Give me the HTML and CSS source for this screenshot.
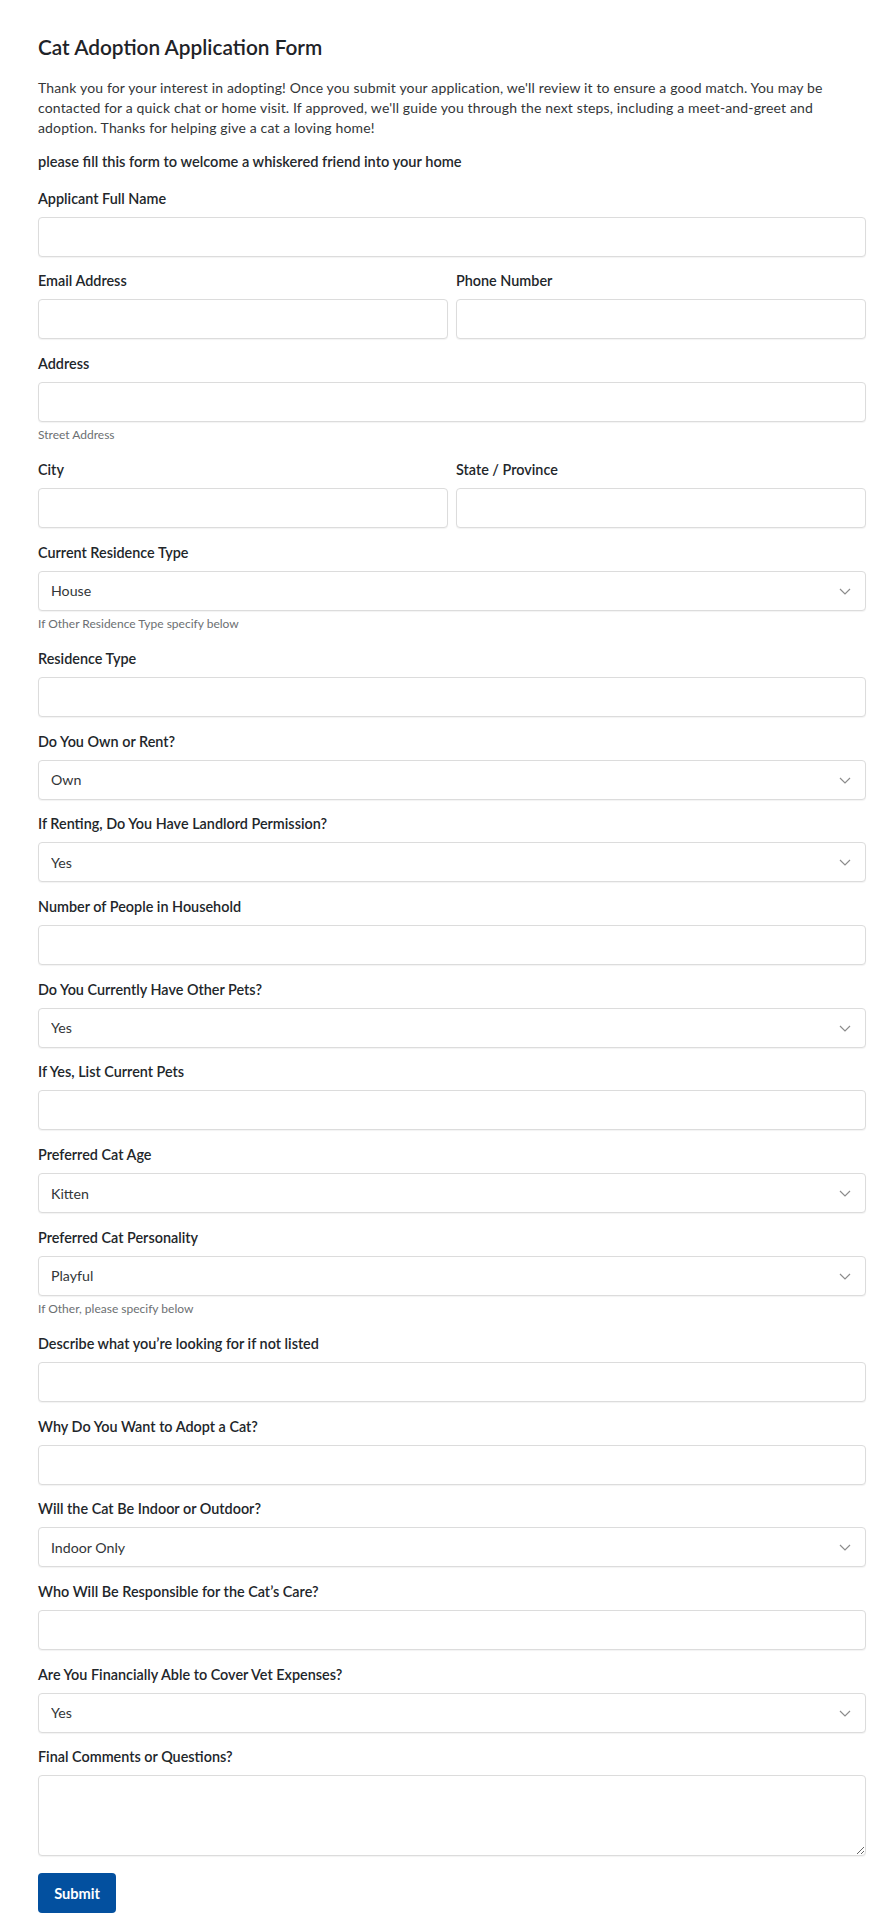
FILE: index.html
```html
<!DOCTYPE html>
<html lang="en">
<head>
<meta charset="utf-8">
<title>Cat Adoption Application Form</title>
<link rel="stylesheet" href="styles.css">
</head>
<body>
<form class="form">
  <h1 class="form-title">Cat Adoption Application Form</h1>
  <p class="intro">Thank you for your interest in adopting! Once you submit your application, we'll review it to ensure a good match. You may be contacted for a quick chat or home visit. If approved, we'll guide you through the next steps, including a meet-and-greet and adoption. Thanks for helping give a cat a loving home!</p>
  <p class="lead">please fill this form to welcome a whiskered friend into your home</p>

  <div class="field">
    <label class="label">Applicant Full Name</label>
    <input class="control" type="text">
  </div>

  <div class="row">
    <div class="field">
      <label class="label">Email Address</label>
      <input class="control" type="email">
    </div>
    <div class="field">
      <label class="label">Phone Number</label>
      <input class="control" type="tel">
    </div>
  </div>

  <div class="field has-help">
    <label class="label">Address</label>
    <input class="control" type="text">
    <div class="help">Street Address</div>
  </div>

  <div class="row">
    <div class="field">
      <label class="label">City</label>
      <input class="control" type="text">
    </div>
    <div class="field">
      <label class="label">State / Province</label>
      <input class="control" type="text">
    </div>
  </div>

  <div class="field has-help">
    <label class="label">Current Residence Type</label>
    <div class="select-wrap">
      <select class="control select"><option>House</option><option>Apartment</option><option>Condo</option><option>Other</option></select>
      <svg class="chevron" width="12" height="7" viewBox="0 0 12 7"><polyline points="1,1 6,6 11,1" fill="none" stroke="#8c8c8c" stroke-width="1.2"/></svg>
    </div>
    <div class="help">If Other Residence Type specify below</div>
  </div>

  <div class="field">
    <label class="label">Residence Type</label>
    <input class="control" type="text">
  </div>

  <div class="field">
    <label class="label">Do You Own or Rent?</label>
    <div class="select-wrap">
      <select class="control select"><option>Own</option><option>Rent</option></select>
      <svg class="chevron" width="12" height="7" viewBox="0 0 12 7"><polyline points="1,1 6,6 11,1" fill="none" stroke="#8c8c8c" stroke-width="1.2"/></svg>
    </div>
  </div>

  <div class="field">
    <label class="label">If Renting, Do You Have Landlord Permission?</label>
    <div class="select-wrap">
      <select class="control select"><option>Yes</option><option>No</option></select>
      <svg class="chevron" width="12" height="7" viewBox="0 0 12 7"><polyline points="1,1 6,6 11,1" fill="none" stroke="#8c8c8c" stroke-width="1.2"/></svg>
    </div>
  </div>

  <div class="field">
    <label class="label">Number of People in Household</label>
    <input class="control" type="text">
  </div>

  <div class="field">
    <label class="label">Do You Currently Have Other Pets?</label>
    <div class="select-wrap">
      <select class="control select"><option>Yes</option><option>No</option></select>
      <svg class="chevron" width="12" height="7" viewBox="0 0 12 7"><polyline points="1,1 6,6 11,1" fill="none" stroke="#8c8c8c" stroke-width="1.2"/></svg>
    </div>
  </div>

  <div class="field">
    <label class="label">If Yes, List Current Pets</label>
    <input class="control" type="text">
  </div>

  <div class="field">
    <label class="label">Preferred Cat Age</label>
    <div class="select-wrap">
      <select class="control select"><option>Kitten</option><option>Young</option><option>Adult</option><option>Senior</option></select>
      <svg class="chevron" width="12" height="7" viewBox="0 0 12 7"><polyline points="1,1 6,6 11,1" fill="none" stroke="#8c8c8c" stroke-width="1.2"/></svg>
    </div>
  </div>

  <div class="field has-help">
    <label class="label">Preferred Cat Personality</label>
    <div class="select-wrap">
      <select class="control select"><option>Playful</option><option>Calm</option><option>Affectionate</option><option>Other</option></select>
      <svg class="chevron" width="12" height="7" viewBox="0 0 12 7"><polyline points="1,1 6,6 11,1" fill="none" stroke="#8c8c8c" stroke-width="1.2"/></svg>
    </div>
    <div class="help">If Other, please specify below</div>
  </div>

  <div class="field">
    <label class="label">Describe what you’re looking for if not listed</label>
    <input class="control" type="text">
  </div>

  <div class="field">
    <label class="label">Why Do You Want to Adopt a Cat?</label>
    <input class="control" type="text">
  </div>

  <div class="field">
    <label class="label">Will the Cat Be Indoor or Outdoor?</label>
    <div class="select-wrap">
      <select class="control select"><option>Indoor Only</option><option>Outdoor Only</option><option>Both</option></select>
      <svg class="chevron" width="12" height="7" viewBox="0 0 12 7"><polyline points="1,1 6,6 11,1" fill="none" stroke="#8c8c8c" stroke-width="1.2"/></svg>
    </div>
  </div>

  <div class="field">
    <label class="label">Who Will Be Responsible for the Cat’s Care?</label>
    <input class="control" type="text">
  </div>

  <div class="field">
    <label class="label">Are You Financially Able to Cover Vet Expenses?</label>
    <div class="select-wrap">
      <select class="control select"><option>Yes</option><option>No</option></select>
      <svg class="chevron" width="12" height="7" viewBox="0 0 12 7"><polyline points="1,1 6,6 11,1" fill="none" stroke="#8c8c8c" stroke-width="1.2"/></svg>
    </div>
  </div>

  <div class="field field-last">
    <label class="label">Final Comments or Questions?</label>
    <textarea class="control textarea"></textarea>
  </div>

  <button class="submit" type="button">Submit</button>
</form>
</body>
</html>
```
FILE: styles.css
```css
html, body {
  margin: 0;
  padding: 0;
  background: #ffffff;
}

body {
  font-family: "Lato", "Roboto", "Liberation Sans", sans-serif;
  color: #2b2f33;
}

.form {
  padding: 35.3px 15px 15px 38px;
}

.form-title {
  margin: 0 0 18.3px;
  font-size: 20.8px;
  line-height: 24px;
  font-weight: 600;
  color: #1f2328;
}

.intro {
  margin: 0 0 14.7px;
  font-size: 14px;
  line-height: 20px;
  letter-spacing: 0.15px;
  color: #333638;
}

.lead {
  margin: 0 0 16.3px;
  font-size: 14.6px;
  line-height: 20px;
  font-weight: 600;
  color: #25292d;
}

.row {
  display: grid;
  grid-template-columns: 1fr 1fr;
  column-gap: 8px;
}

.field {
  display: flex;
  flex-direction: column;
  margin-bottom: 14.7px;
}

.label {
  display: block;
  margin-bottom: 8px;
  font-size: 14.4px;
  line-height: 20px;
  font-weight: 600;
  color: #22262a;
}

.control {
  box-sizing: border-box;
  width: 100%;
  height: 40px;
  margin: 0;
  padding: 0 12px;
  border: 1px solid #dcdcdc;
  border-radius: 4px;
  background: #ffffff;
  box-shadow: 0 1px 1px rgba(0, 0, 0, 0.05);
  font-family: inherit;
  font-size: 14.2px;
  color: #333638;
  outline: none;
}

.select-wrap {
  position: relative;
}

.select {
  -webkit-appearance: none;
  appearance: none;
  padding-right: 36px;
}

.chevron {
  position: absolute;
  right: 15px;
  top: 17px;
  pointer-events: none;
}

.help {
  margin-top: 4px;
  margin-bottom: 1.5px;
  font-size: 12px;
  line-height: 18px;
  color: #6c6f72;
}

.textarea {
  height: 81px;
  padding: 8px 12px;
  resize: vertical;
}

.field-last {
  margin-bottom: 16.6px;
}

.submit {
  display: block;
  box-sizing: border-box;
  width: 78px;
  height: 40px;
  padding: 0;
  border: none;
  border-radius: 4px;
  background: #03509f;
  color: #ffffff;
  font-family: inherit;
  font-size: 14.6px;
  font-weight: 700;
  cursor: pointer;
}
```
